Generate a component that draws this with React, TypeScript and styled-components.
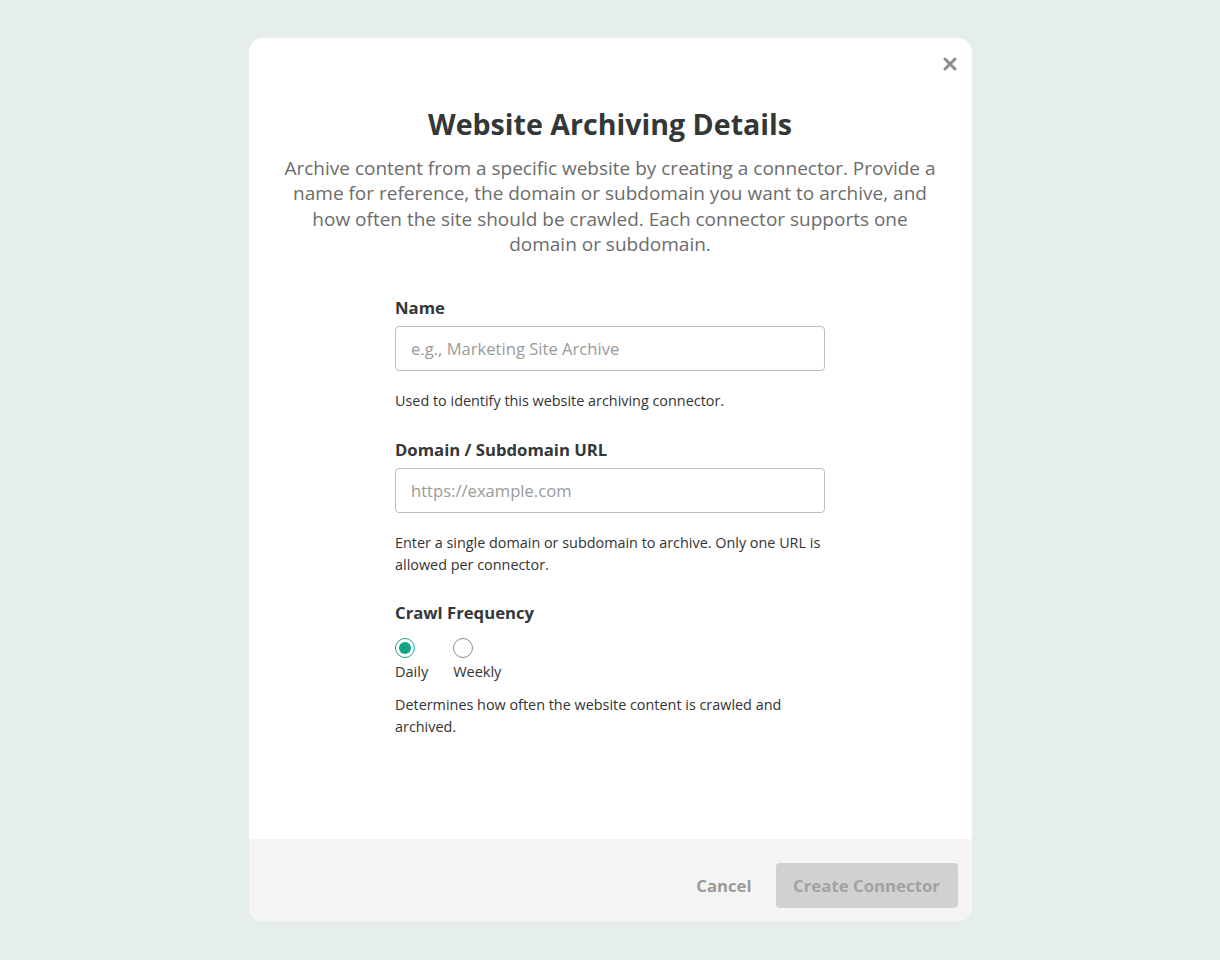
import React, { useState } from 'react'
import { styled, createGlobalStyle } from 'styled-components'

const GlobalStyle = createGlobalStyle`
  html, body {
    margin: 0;
    padding: 0;
    background: #e6eeec;
    font-family: "Open Sans", "Noto Sans", sans-serif;
  }
`

const Page = styled.div`
  display: flex;
  justify-content: center;
  padding-top: 38px;
  min-height: 960px;
  box-sizing: border-box;
`

const Modal = styled.section`
  position: relative;
  width: 723px;
  height: 883px;
  background: #ffffff;
  border-radius: 14px;
  overflow: hidden;
  display: flex;
  flex-direction: column;
`

const CloseButton = styled.button`
  position: absolute;
  top: 17px;
  right: 13px;
  width: 18px;
  height: 18px;
  padding: 0;
  border: none;
  background: none;
  display: flex;
  align-items: center;
  justify-content: center;
  cursor: pointer;
`

const Body = styled.div`
  flex: 1;
  padding: 68px 30px 0;
  display: flex;
  flex-direction: column;
  align-items: center;
`

const Title = styled.h1`
  margin: 0;
  font-size: 28.6px;
  line-height: 36px;
  font-weight: 700;
  color: #323837;
  text-align: center;
`

const Description = styled.p`
  margin: 14px 0 0;
  font-size: 19px;
  line-height: 25.3px;
  color: #6c6c6c;
  text-align: center;
`

const Form = styled.form`
  width: 430px;
  margin-top: 40px;
  display: flex;
  flex-direction: column;
`

const Field = styled.div<{ $gap?: number }>`
  display: flex;
  flex-direction: column;
  margin-top: ${(p) => p.$gap ?? 0}px;
`

const Label = styled.label`
  font-size: 16.7px;
  line-height: 22px;
  font-weight: 700;
  color: #323837;
`

const Input = styled.input`
  margin-top: 7px;
  height: 45px;
  box-sizing: border-box;
  padding: 0 15px;
  border: 1px solid #bdbdbd;
  border-radius: 4px;
  font-family: inherit;
  font-size: 16.6px;
  color: #333;
  outline: none;

  &::placeholder {
    color: #9a9a9a;
  }
`

const Help = styled.p<{ $top?: number }>`
  margin: ${(p) => p.$top ?? 19}px 0 0;
  font-size: 14.4px;
  line-height: 22px;
  color: #333;
`

const RadioRow = styled.div`
  display: flex;
  gap: 25px;
  margin-top: 14px;
`

const RadioOption = styled.label`
  display: flex;
  flex-direction: column;
  align-items: flex-start;
  gap: 4px;
  font-size: 14.5px;
  line-height: 20px;
  color: #333;
  cursor: pointer;
`

const RadioCircle = styled.span<{ $checked: boolean }>`
  width: 20px;
  height: 20px;
  box-sizing: border-box;
  border-radius: 50%;
  border: 1.5px solid ${(p) => (p.$checked ? '#1aa88a' : '#8a8a8a')};
  display: flex;
  align-items: center;
  justify-content: center;

  &::after {
    content: '';
    width: 12px;
    height: 12px;
    border-radius: 50%;
    background: #14a383;
    display: ${(p) => (p.$checked ? 'block' : 'none')};
  }
`

const HiddenRadio = styled.input`
  display: none;
`

const Footer = styled.footer`
  height: 82px;
  box-sizing: border-box;
  background: #f4f4f4;
  display: flex;
  align-items: flex-start;
  justify-content: flex-end;
  gap: 24px;
  padding: 24px 14px 0;
`

const TextButton = styled.button`
  height: 45px;
  border: none;
  background: none;
  font-family: inherit;
  font-size: 16.7px;
  font-weight: 700;
  color: #9a9a9a;
  padding: 0;
  cursor: pointer;
`

const PrimaryButton = styled.button`
  width: 182px;
  height: 45px;
  border: none;
  border-radius: 4px;
  background: #d1d1d1;
  color: #a2a2a2;
  font-family: inherit;
  font-size: 16.8px;
  font-weight: 700;
  cursor: not-allowed;
`

const frequencies = ['Daily', 'Weekly']

export default function App() {
  const [freq, setFreq] = useState('Daily')

  return (
    <>
      <GlobalStyle />
      <Page>
        <Modal>
          <CloseButton aria-label="Close">
            <svg width="16" height="16" viewBox="0 0 16 16">
              <path d="M3 3 L13 13 M13 3 L3 13" stroke="#8c8c8c" strokeWidth="3" strokeLinecap="round" />
            </svg>
          </CloseButton>
          <Body>
            <Title>Website Archiving Details</Title>
            <Description>
              Archive content from a specific website by creating a connector. Provide a name for
              reference, the domain or subdomain you want to archive, and how often the site should
              be crawled. Each connector supports one domain or subdomain.
            </Description>
            <Form onSubmit={(e) => e.preventDefault()}>
              <Field>
                <Label htmlFor="name">Name</Label>
                <Input id="name" placeholder="e.g., Marketing Site Archive" />
                <Help>Used to identify this website archiving connector.</Help>
              </Field>
              <Field $gap={27}>
                <Label htmlFor="url">Domain / Subdomain URL</Label>
                <Input id="url" placeholder="https://example.com" />
                <Help>
                  Enter a single domain or subdomain to archive. Only one URL is allowed per
                  connector.
                </Help>
              </Field>
              <Field $gap={26}>
                <Label as="div">Crawl Frequency</Label>
                <RadioRow>
                  {frequencies.map((f) => (
                    <RadioOption key={f}>
                      <HiddenRadio
                        type="radio"
                        name="freq"
                        checked={freq === f}
                        onChange={() => setFreq(f)}
                      />
                      <RadioCircle $checked={freq === f} />
                      {f}
                    </RadioOption>
                  ))}
                </RadioRow>
                <Help $top={12}>Determines how often the website content is crawled and archived.</Help>
              </Field>
            </Form>
          </Body>
          <Footer>
            <TextButton>Cancel</TextButton>
            <PrimaryButton disabled>Create Connector</PrimaryButton>
          </Footer>
        </Modal>
      </Page>
    </>
  )
}
